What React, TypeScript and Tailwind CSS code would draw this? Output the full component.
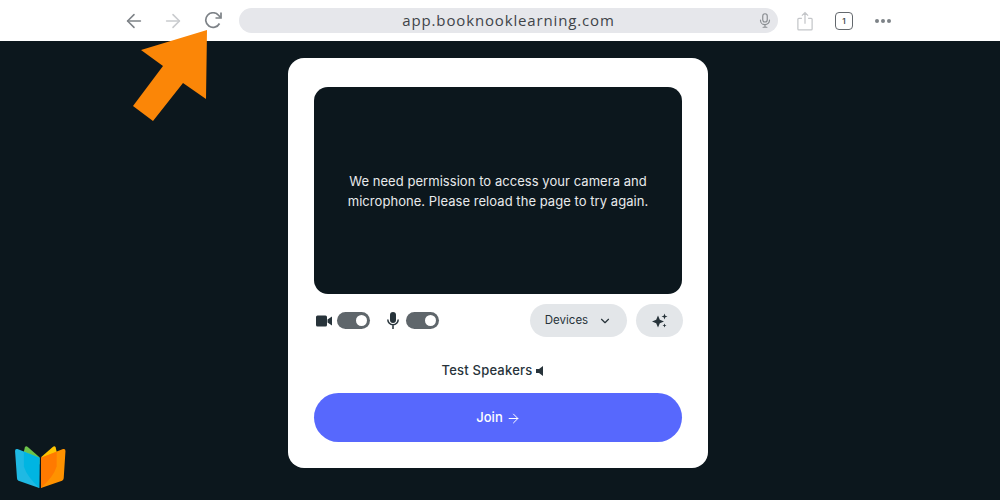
import { ArrowLeft, ArrowRight, ChevronDown } from 'lucide-react';

function MicIcon({ className }: { className: string }) {
  return (
    <svg viewBox="0 0 16 20" className={className} fill="none" stroke="currentColor" strokeWidth="1.6" strokeLinecap="round">
      <rect x="5" y="1" width="6" height="11" rx="3" />
      <path d="M2 9.5a6 6 0 0 0 12 0M8 15.5V19M5.5 19h5" />
    </svg>
  );
}

function MicSolid() {
  return (
    <svg viewBox="0 0 12 17" className="ml-[17px] h-[17px] w-[12px] text-[#27333a]">
      <rect x="3" y="0" width="6" height="11" rx="3" fill="currentColor" />
      <path d="M0.8 7.5a5.2 5.2 0 0 0 10.4 0M6 13v4" fill="none" stroke="currentColor" strokeWidth="1.5" />
    </svg>
  );
}

function Toggle() {
  return (
    <div className="flex h-[17px] w-[33px] items-center justify-end rounded-full bg-[#5f666b] pr-[3px]">
      <div className="h-[11px] w-[11px] rounded-full bg-white" />
    </div>
  );
}

function Logo() {
  return (
    <svg viewBox="0 0 54 48" className="absolute bottom-[8px] left-[14px] h-[47px] w-[53px]">
      <path d="M10 7 L11 2.5 Q12 0.5 14 2 L26 12.5 V20 Z" fill="#6cc24a" />
      <path d="M27.5 12.5 L39.5 2 Q41.5 0.5 42.5 2.5 L43.5 7 V20 Z" fill="#ffc400" />
      <path d="M1 6 Q1 3.5 3.5 4.2 L26 13 L25.7 44 L4.5 36.5 Q3 36 3 34 Z" fill="#1fb9e3" />
      <path d="M10 7 L26 13 L25.7 44 Q13 32 10 22 Z" fill="#00b5e2" />
      <path d="M52.5 6 Q52.5 3.5 50 4.2 L27.5 13 V44 L49 36.5 Q50.5 36 50.7 34 Z" fill="#ff9200" />
      <path d="M43.5 7 L27.5 13 V44 Q40.5 32 43.5 22 Z" fill="#ff7a00" />
    </svg>
  );
}

export default function App() {
  return (
    <div className="relative flex h-[500px] w-[1000px] flex-col overflow-hidden bg-[#0c171d]" style={{ fontFamily: 'Inter, sans-serif' }}>
      {/* Browser bar */}
      <div className="flex h-[41px] items-center bg-white pl-[123px]">
        <ArrowLeft className="h-[22px] w-[22px] text-[#7d8287]" strokeWidth={1.7} />
        <ArrowRight className="ml-[17px] h-[22px] w-[22px] text-[#c9cbce]" strokeWidth={1.7} />
        <svg viewBox="0 0 18 17" className="ml-[20px] h-[17px] w-[18px] text-[#7d8287]" fill="none" stroke="currentColor" strokeWidth="1.7">
          <path d="M15.5 11.5A7.3 7.3 0 1 1 14.5 3.2L16.5 5.5" />
          <path d="M17 0.5V6H11.5" />
        </svg>
        <div className="relative ml-[17px] flex h-[25px] w-[539px] items-center justify-center rounded-full bg-[#e6e7eb]">
          <span className="text-[15px] tracking-[0.85px] text-[#3f4449]" style={{ fontFamily: '"Open Sans", sans-serif' }}>
            app.booknooklearning.com
          </span>
          <MicIcon className="absolute right-[7px] top-[5px] h-[15px] w-[12px] text-[#8a8e92]" />
        </div>
        <svg viewBox="0 0 18 22" className="ml-[19px] h-[20px] w-[16px] text-[#c4c6c9]" fill="none" stroke="currentColor" strokeWidth="1.4">
          <path d="M5.5 8H2a1 1 0 0 0-1 1v11a1 1 0 0 0 1 1h14a1 1 0 0 0 1-1V9a1 1 0 0 0-1-1h-3.5M9 14V1.5M5.5 5 9 1.5 12.5 5" />
        </svg>
        <div className="ml-[22px] flex h-[18px] w-[18px] items-center justify-center rounded-[4px] border-[1.5px] border-[#63686d] text-[8px] font-semibold text-[#4a4f54]">
          1
        </div>
        <div className="ml-[22px] flex gap-[2px]">
          <div className="h-[4px] w-[4px] rounded-full bg-[#7d8287]" />
          <div className="h-[4px] w-[4px] rounded-full bg-[#7d8287]" />
          <div className="h-[4px] w-[4px] rounded-full bg-[#7d8287]" />
        </div>
      </div>

      {/* Join card */}
      <div className="ml-[288px] mt-[17px] flex h-[410px] w-[420px] flex-col rounded-[16px] bg-white px-[26px] pt-[29px]">
        <div className="flex h-[207px] items-center justify-center rounded-[14px] bg-[#0c171d] px-[24px]">
          <p className="text-center text-[13px] leading-[20px] tracking-[0.05px] text-[#e8eaec]">
            We need permission to access your camera and microphone. Please reload the page to try again.
          </p>
        </div>

        <div className="mt-[10px] flex h-[33px] items-center">
          <svg viewBox="0 0 16 12" className="ml-[2px] h-[12px] w-[16px] text-[#27333a]" fill="currentColor">
            <rect x="0" y="0.5" width="11" height="11" rx="1.5" />
            <path d="M11.5 4.5 16 1.5v9l-4.5-3z" />
          </svg>
          <div className="ml-[5px]">
            <Toggle />
          </div>
          <MicSolid />
          <div className="ml-[7px]">
            <Toggle />
          </div>
          <div className="ml-auto flex h-[33px] w-[97px] items-center justify-center gap-[10px] rounded-full bg-[#e3e6e9] text-[11.5px] font-normal text-[#27333a]">
            <span className="pt-[1px]">Devices</span>
            <ChevronDown className="h-[14px] w-[14px]" strokeWidth={2} />
          </div>
          <div className="ml-[9px] mr-[-1px] flex h-[33px] w-[47px] items-center justify-center rounded-full bg-[#e3e6e9]">
            <svg viewBox="0 0 16 16" className="h-[16px] w-[16px] text-[#27333a]" fill="currentColor">
              <path d="M6 2.5 7.8 6.7 12 8.5 7.8 10.3 6 14.5 4.2 10.3 0 8.5 4.2 6.7z" />
              <path d="M12.5 0.5 13.3 2.7 15.5 3.5 13.3 4.3 12.5 6.5 11.7 4.3 9.5 3.5 11.7 2.7z" />
              <path d="M12.5 10.5 13.1 12 14.5 12.5 13.1 13 12.5 14.5 11.9 13 10.5 12.5 11.9 12z" />
            </svg>
          </div>
        </div>

        <div className="mt-[25px] flex h-[18px] items-center justify-center gap-[4px] pr-[10px] text-[13px] font-medium tracking-[0.2px] text-[#27333a]">
          Test Speakers
          <svg viewBox="0 0 8 10" className="h-[10px] w-[8px]" fill="currentColor">
            <path d="M0 3h3l4-3v10L3 7H0z" />
          </svg>
        </div>

        <div className="mt-[13px] flex h-[49px] items-center justify-center gap-[3px] rounded-full bg-[#5768fd] pl-[1px] pt-[1px] text-[13px] font-medium text-white">
          Join
          <ArrowRight className="h-[15px] w-[15px]" strokeWidth={1.6} />
        </div>
      </div>

      {/* Pointer to reload */}
      <svg viewBox="0 0 100 100" className="absolute left-[128px] top-[25px] h-[100px] w-[100px]">
        <path d="M79 5 13 25 35 41 5 81 25 96 55 58 78 74z" fill="#fb8607" />
      </svg>

      <Logo />
    </div>
  );
}
